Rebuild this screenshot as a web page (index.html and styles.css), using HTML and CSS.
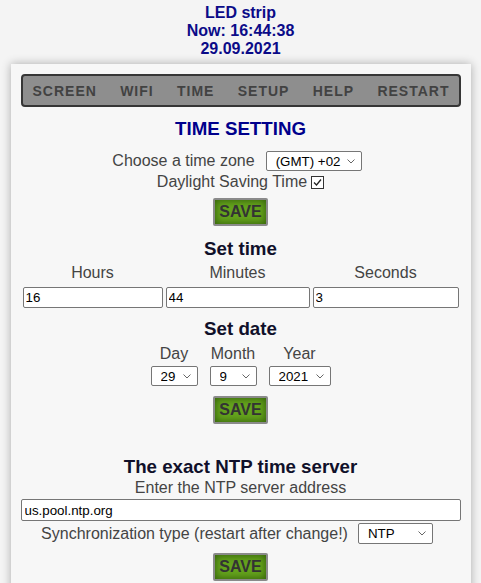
FILE: index.html
```html
<!DOCTYPE html>
<html>
<head>
<meta charset="utf-8">
<link rel="stylesheet" href="styles.css">
</head>
<body>
<header class="top">
  <div>LED strip</div>
  <div>Now: 16:44:38</div>
  <div>29.09.2021</div>
</header>
<main class="card">
  <nav class="tabs">
    <span>SCREEN</span><span>WIFI</span><span>TIME</span><span>SETUP</span><span>HELP</span><span>RESTART</span>
  </nav>
  <h2 class="title">TIME SETTING</h2>
  <div class="row row-tz">
    <span>Choose a time zone</span>
    <select class="sel sel-tz"><option>(GMT) +02</option></select>
  </div>
  <div class="row row-dst">
    <span>Daylight Saving Time</span>
    <svg class="check" width="13" height="13" viewBox="0 0 13 13"><rect x="0.5" y="0.5" width="12" height="12" fill="#fff" stroke="#333"/><polyline points="3,6.5 5.5,9 10,3.5" fill="none" stroke="#222" stroke-width="1.3"/></svg>
  </div>
  <div class="btn-wrap"><button class="save save-1">SAVE</button></div>

  <h3 class="sub sub-time">Set time</h3>
  <div class="time-grid">
    <div class="lbl">Hours</div><div class="lbl">Minutes</div><div class="lbl">Seconds</div>
    <input class="inp" type="text" value="16"><input class="inp" type="text" value="44"><input class="inp" type="text" value="3">
  </div>

  <h3 class="sub sub-date">Set date</h3>
  <div class="date-row">
    <div class="dcol"><span class="lbl">Day</span><select class="sel sel-day"><option>29</option></select></div>
    <div class="dcol"><span class="lbl">Month</span><select class="sel sel-month"><option>9</option></select></div>
    <div class="dcol"><span class="lbl">Year</span><select class="sel sel-year"><option>2021</option></select></div>
  </div>
  <div class="btn-wrap"><button class="save save-2">SAVE</button></div>

  <h3 class="sub sub-ntp">The exact NTP time server</h3>
  <div class="lbl lbl-ntp">Enter the NTP server address</div>
  <input class="inp inp-ntp" type="text" value="us.pool.ntp.org">
  <div class="row row-sync">
    <span>Synchronization type (restart after change!)</span>
    <select class="sel sel-ntp"><option>NTP</option></select>
  </div>
  <div class="btn-wrap"><button class="save save-3">SAVE</button></div>
</main>
</body>
</html>
```
FILE: styles.css
```css
html, body {
  margin: 0;
  padding: 0;
  background: #f4f4f4;
  font-family: "Liberation Sans", Arial, sans-serif;
  color: #444;
}
.top {
  padding-top: 4px;
  text-align: center;
  font-weight: bold;
  font-size: 16px;
  line-height: 18px;
  color: #0b0b88;
}
.card {
  box-sizing: border-box;
  width: 460px;
  margin: 6px auto 0;
  padding: 10px 10px 20px;
  background: #f7f7f7;
  box-shadow: 0 0 9px rgba(0,0,0,0.3);
  text-align: center;
  font-size: 16px;
}
.tabs {
  box-sizing: border-box;
  height: 33px;
  display: flex;
  align-items: center;
  justify-content: space-between;
  padding: 0 9px 0 10px;
  border: 2px solid #363636;
  border-radius: 4px;
  background: #8e8e8e;
  font-weight: bold;
  font-size: 14px;
  letter-spacing: 1px;
  color: #424242;
}
.title {
  margin: 11px 0 0;
  font-size: 18.72px;
  line-height: 22px;
  font-weight: bold;
  color: #00008c;
}
.row {
  display: flex;
  align-items: center;
  justify-content: center;
  color: #444;
}
.row-tz { margin-top: 11px; height: 20px; padding-right: 7px; }
.row-tz .sel { margin-left: 11px; }
.row-dst { margin-top: 2px; height: 18px; }
.check { margin-left: 4px; display: block; }
.sel {
  -webkit-appearance: none;
  appearance: none;
  box-sizing: border-box;
  height: 20px;
  font-family: "Liberation Sans", Arial, sans-serif;
  font-size: 13.33px;
  color: #000;
  background-color: #fff;
  background-image: url("data:image/svg+xml,%3Csvg xmlns='http://www.w3.org/2000/svg' width='8' height='5' viewBox='0 0 8 5'%3E%3Cpolyline points='0.5,0.5 4,4 7.5,0.5' fill='none' stroke='%23666' stroke-width='1'/%3E%3C/svg%3E");
  background-repeat: no-repeat;
  background-position: right 6px center;
  border: 1px solid #767676;
  border-radius: 2px;
  padding: 0 0 0 9px;
}
.sel-tz { width: 96px; }
.sel-day { width: 47px; }
.sel-month { width: 47px; }
.sel-year { width: 62px; }
.sel-ntp { width: 75px; height: 21px; margin-left: 10px; }
.btn-wrap { display: flex; justify-content: center; }
.save {
  box-sizing: border-box;
  height: 28px;
  padding: 3px 4px;
  line-height: 18px;
  font-family: "Liberation Sans", Arial, sans-serif;
  font-weight: bold;
  font-size: 16px;
  color: #333;
  background: #65a31d;
  border: 2px solid #8a8a8a;
  border-radius: 2px;
  box-shadow: inset 0 0 7px 1px #35620a;
}
.save-1 { margin-top: 7px; }
.save-2 { margin-top: 10px; }
.save-3 { margin-top: 9px; }
.sub {
  margin: 0;
  font-size: 18.72px;
  line-height: 22px;
  font-weight: bold;
  color: #10102a;
}
.sub-time { margin-top: 12px; }
.sub-date { margin-top: 10px; }
.sub-ntp { margin-top: 32px; }
.lbl { color: #444; line-height: 18px; }
.time-grid {
  display: grid;
  grid-template-columns: 140fr 144fr 146fr;
  column-gap: 3px;
  row-gap: 5px;
  padding: 0 2px;
  margin-top: 4px;
}
.inp {
  box-sizing: border-box;
  width: 100%;
  height: 21px;
  margin: 0;
  padding: 0 2px;
  border: 1px solid #767676;
  border-radius: 2px;
  background: #fff;
  font-family: "Liberation Sans", Arial, sans-serif;
  font-size: 13.33px;
  color: #000;
}
.date-row {
  display: flex;
  justify-content: center;
  gap: 12px;
  margin-top: 5px;
}
.dcol {
  display: flex;
  flex-direction: column;
  align-items: center;
  gap: 3px;
}
.lbl-ntp { margin-top: 1px; }
.inp-ntp { display: block; margin-top: 2px; height: 22px; padding: 0 3px; }
.row-sync { margin-top: 2px; height: 21px; padding-right: 7px; }
```
